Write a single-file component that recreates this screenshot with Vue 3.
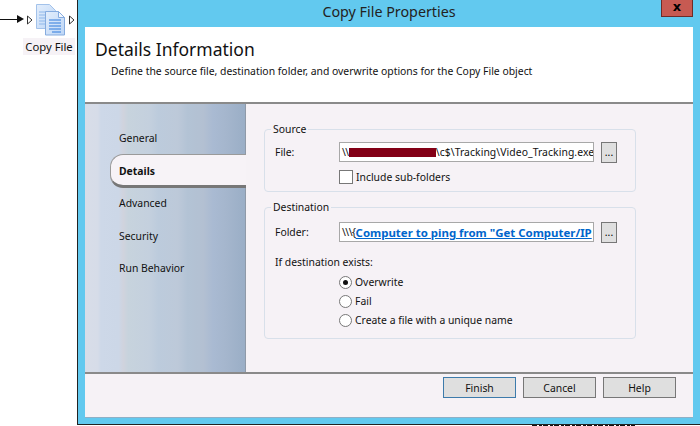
<script setup>
const tabs = [
  { name: 'General' },
  { name: 'Details', active: true },
  { name: 'Advanced' },
  { name: 'Security' },
  { name: 'Run Behavior' },
]
const options = [
  { label: 'Overwrite', on: true },
  { label: 'Fail' },
  { label: 'Create a file with a unique name' },
]
</script>

<template>
  <div class="page">
    <div class="canvas">
      <div class="node">
        <span class="wire"></span>
        <svg class="pin" width="6" height="10" viewBox="0 0 6 10"><path d="M.5 1v8L5 5z" fill="#fff" stroke="#333"/></svg>
        <svg class="doc" width="29" height="32" viewBox="0 0 29 32">
          <defs>
            <linearGradient id="docfill" x1="0" y1="0" x2="1" y2="1">
              <stop offset="0" stop-color="#e3eefc"/>
              <stop offset="1" stop-color="#bdd6f6"/>
            </linearGradient>
          </defs>
          <path d="M.5.5h13l6 6v18H.5z" fill="url(#docfill)" stroke="#a3c2ea"/>
          <path d="M3 8h8M3 11h8M3 14h8M3 17h8M3 20h8" stroke="#8fb8ea"/>
          <path d="M9.500 7.500h13l6 6v17.500h-19z" fill="url(#docfill)" stroke="#86acdf"/>
          <path d="M22.500 7.500v6h6z" fill="#f4f8fe" stroke="#86acdf"/>
          <path d="M13 16h12M13 19h12M13 22h12M13 25h12M16 28h9" stroke="#2f7bdc"/>
        </svg>
        <svg class="pin pin-out" width="6" height="10" viewBox="0 0 6 10"><path d="M.5 1v8L5 5z" fill="#fff" stroke="#333"/></svg>
      </div>
      <div class="node-label">Copy File</div>
    </div>

    <div class="stage">
      <div class="window">
        <div class="titlebar">
          <span class="title">Copy File Properties</span>
          <span class="close">x</span>
        </div>
        <div class="client">
          <header class="head">
            <h1>Details Information</h1>
            <p>Define the source file, destination folder, and overwrite options for the Copy File object</p>
          </header>
          <div class="main">
            <nav class="side">
              <div v-for="t in tabs" :key="t.name" class="tab" :class="{ active: t.active }">{{ t.name }}</div>
            </nav>
            <div class="panel">
              <fieldset class="group source">
                <legend>Source</legend>
                <div class="row">
                  <label>File:</label>
                  <div class="input"><span class="tight">\\</span><span class="redact"></span><span class="path">\c$\Tracking\Video_Tracking.exe</span></div>
                  <button class="dots">...</button>
                </div>
                <div class="check-row"><span class="check"></span>Include sub-folders</div>
              </fieldset>
              <fieldset class="group dest">
                <legend>Destination</legend>
                <div class="row">
                  <label>Folder:</label>
                  <div class="input"><span class="tight">\\\{</span><a class="link">Computer to ping from "Get Computer/IP</a></div>
                  <button class="dots">...</button>
                </div>
                <div class="exists">If destination exists:</div>
                <div class="radios">
                  <div v-for="o in options" :key="o.label" class="radio-row">
                    <span class="radio" :class="{ on: o.on }"></span>{{ o.label }}
                  </div>
                </div>
              </fieldset>
            </div>
          </div>
          <footer class="foot">
            <button class="btn primary">Finish</button>
            <button class="btn">Cancel</button>
            <button class="btn">Help</button>
          </footer>
        </div>
      </div>
      <div class="peek"></div>
    </div>
  </div>
</template>

<style>
html, body { margin: 0; background: #fff; }
</style>

<style scoped>
.page {
  width: 700px; height: 426px; display: flex; overflow: hidden; background: #fff;
  font-family: "Noto Sans", "DejaVu Sans", sans-serif; font-size: 10.4px; color: #111;
}
.canvas { width: 77px; flex: none; }
.node { display: flex; align-items: flex-start; height: 38px; padding-top: 4px; box-sizing: border-box; }
.wire { width: 25px; height: 11px; flex: none; margin-top: 10px; position: relative;
  background: linear-gradient(#111,#111) 0 5px/18px 1px no-repeat; }
.wire::after { content: ""; position: absolute; left: 17px; top: 1px; border-left: 7px solid #111; border-top: 4px solid transparent; border-bottom: 4px solid transparent; }
.pin { margin: 11px 0 0 2px; flex: none; }
.doc { margin-left: 3px; flex: none; }
.pin-out { margin-left: 4px; }
.node-label { margin: 0 0 0 23px; width: 52px; height: 17px; background: #f6f2f6; line-height: 17px; white-space: nowrap; font-size: 11.3px; text-align: center; }

.stage { width: 623px; flex: none; display: flex; flex-direction: column; }
.window {
  height: 425px; flex: none; box-sizing: border-box; background: #62c9ef;
  border-left: 1px solid #222; border-bottom: 1px solid #222;
  padding: 0 7px 7px 7px; display: flex; flex-direction: column;
}
.peek {
  height: 1px; width: 103px; margin-left: 455px;
  background: repeating-linear-gradient(90deg, #111 0 5px, #fff 5px 7px, #111 7px 10px, #fff 10px 11px);
}
.titlebar { height: 27px; flex: none; position: relative; text-align: center; line-height: 23px; font-size: 14.3px; color: #222; }
.title { position: relative; }
.close { position: absolute; right: 0; top: 0; width: 32px; height: 17px; box-sizing: border-box;
  background: #c75a52; border: 1px solid #6e2b28; border-top: 0; color: #000; font: bold 13px/13px "DejaVu Sans", sans-serif; }
.client { flex: 1; min-height: 0; display: flex; flex-direction: column; background: #f6f2f6; box-shadow: 0 1px 0 #8fb0c6; }
.head { height: 75px; flex: none; box-sizing: border-box; background: #fff; padding: 10px 0 0 10px; }
.head h1 { margin: 0; font-size: 17.5px; font-weight: 400; line-height: 24px; color: #111; }
.head p { margin: 3px 0 0 16px; line-height: 15px; }
.main { flex: 1; min-height: 0; display: flex; border-top: 2px solid #8a8a8a; border-bottom: 2px solid #8a8a8a; }
.side {
  width: 161px; flex: none; padding-top: 17px; box-sizing: border-box; border-right: 1px solid #8f9aa8;
  background: linear-gradient(90deg,
    #d8dde8 0, #d6dce8 8%, #cdd8e8 10%, #ccd7e7 21%, #d0d3dd 24%, #c7d3dd 27%, #c4d0de 40%,
    #bccbdc 46%, #bdc9d9 58%, #b3c3d5 64%, #b3c0d2 74%, #a9bad2 80%, #a5b6cd 88%, #9aaec6 100%);
}
.tab { height: 33px; padding-left: 34px; display: flex; align-items: center; box-sizing: border-box; margin-right: -1px; }
.tab.active {
  margin-left: 25px; margin-bottom: -2px; padding: 2px 0 0 8px; height: 34px; font-weight: 700; background: #f7f3f7;
  border: 1px solid #9a9a9a; border-right: 0; border-bottom: 3px solid #777; border-radius: 13px 0 0 13px;
}
.tab:last-child { margin-top: -1px; }
.panel { flex: 1; min-width: 0; padding: 19px 0 0 18px; }
.group { width: 372px; box-sizing: border-box; margin: 0; padding: 0; border: 1px solid #d8e0ea; border-radius: 4px; }
.group legend { padding: 0 2px; margin-left: 6px; line-height: 12px; }
.source { height: 69px; }
.dest { height: 138px; margin-top: 9px; }
.row { display: flex; align-items: center; height: 22px; margin-top: 6px; }
.dest .row { margin-top: 8px; }
.row label { width: 74px; padding-left: 10px; box-sizing: border-box; flex: none; }
.input {
  width: 255px; height: 20px; flex: none; box-sizing: border-box; background: #fff; border: 1px solid #a8a8a8;
  display: flex; align-items: center; padding-left: 2px; white-space: nowrap; overflow: hidden;
}
.tight { letter-spacing: -0.5px; flex: none; }
.redact { width: 87px; height: 9px; background: #830016; flex: none; }
.path { letter-spacing: 0.06px; }
.link { color: #0066cc; font-weight: 700; font-size: 11.45px; text-decoration: underline; }
.dots { width: 16px; height: 21px; margin-left: 7px; padding: 0; background: #dfdfdf; border: 1px solid #777; font: inherit; line-height: 12px; flex: none; }
.check-row { display: flex; align-items: center; margin: 7px 0 0 74px; height: 14px; line-height: 14px; }
.check { width: 12px; height: 12px; border: 1px solid #777; background: #fff; margin-right: 3px; flex: none; }
.exists { margin: 12px 0 0 10px; line-height: 15px; }
.radios { margin: 4px 0 0 74px; display: flex; flex-direction: column; gap: 3px; }
.radio-row { display: flex; align-items: center; height: 16px; white-space: nowrap; }
.radio { width: 11px; height: 11px; border: 1px solid #777; border-radius: 50%; background: #fff; margin-right: 3px; flex: none; position: relative; }
.radio.on::after { content: ""; position: absolute; left: 3px; top: 3px; width: 5px; height: 5px; border-radius: 50%; background: #111; }
.foot { height: 43px; flex: none; display: flex; justify-content: flex-end; padding: 3px 17px 0 0; box-sizing: border-box; gap: 7px; }
.btn { width: 73px; height: 21px; padding: 0; background: #dfdfdf; border: 1px solid #777; font: inherit; color: #111; }
.btn.primary { border-color: #3d7bab; }
</style>
